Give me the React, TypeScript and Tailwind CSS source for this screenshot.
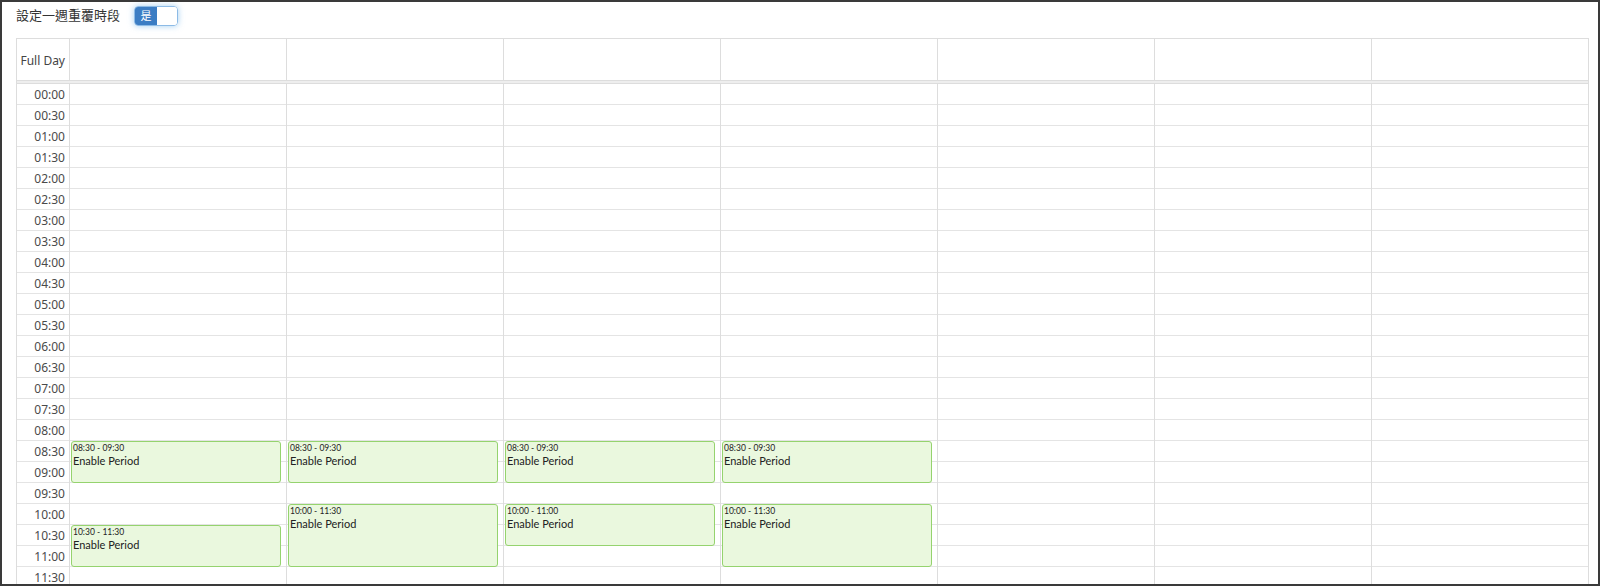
import React from 'react';

type Period = { day: number; start: string; end: string };

const ROW_H = 21;

// half-hour slots from 00:00 to 11:30; the rest is scrolled out of view
const slots = Array.from({ length: 24 }, (_, i) => {
  const h = String(Math.floor(i / 2)).padStart(2, '0');
  return `${h}:${i % 2 ? '30' : '00'}`;
});

const periods: Period[] = [
  { day: 0, start: '08:30', end: '09:30' },
  { day: 0, start: '10:30', end: '11:30' },
  { day: 1, start: '08:30', end: '09:30' },
  { day: 1, start: '10:00', end: '11:30' },
  { day: 2, start: '08:30', end: '09:30' },
  { day: 2, start: '10:00', end: '11:00' },
  { day: 3, start: '08:30', end: '09:30' },
  { day: 3, start: '10:00', end: '11:30' },
];

const slotIndex = (t: string) => slots.indexOf(t);

const Toggle: React.FC = () => (
  <div className="flex h-[20px] w-[44px] overflow-hidden rounded-[4px] border border-[#8dbbe6] shadow-[0_0_6px_rgba(102,175,233,0.6)]">
    <div className="flex w-[22px] items-center justify-center bg-[#3b7dc4] text-[11px] text-white">是</div>
    <div className="flex-1 bg-white" />
  </div>
);

const EventBlock: React.FC<{ p: Period }> = ({ p }) => {
  const s = slotIndex(p.start);
  const e = slotIndex(p.end);
  return (
    <div
      className="absolute left-[1px] right-[5px] rounded-[3px] border border-[#95d36e] bg-[#eaf8de] px-[1px] font-['Lato',sans-serif] text-[#222]"
      style={{ top: s * ROW_H, height: (e - s) * ROW_H }}
    >
      <div className="mt-[1px] text-[8.5px] leading-[11px]">
        {p.start} - {p.end}
      </div>
      <div className="text-[11px] leading-[14px]">Enable Period</div>
    </div>
  );
};

export default function App() {
  return (
    <div className="h-[588px] w-[1600px] bg-white font-['Noto_Sans','Noto_Sans_CJK_TC',sans-serif]">
      <div className="h-[586px] overflow-hidden border-2 border-[#3a3a3a] pl-[14px]">
        <div className="flex h-[28px] items-center gap-[14px]">
          <span className="text-[13px] text-[#333]">設定一週重覆時段</span>
          <Toggle />
        </div>

        <div className="mt-[8px] w-[1573px] border border-[#ddd]">
          {/* all-day row */}
          <div className="grid h-[41px] grid-cols-[52px_repeat(7,1fr)]">
            <div className="flex items-center justify-end pr-[4px] pt-[2px] text-[12px] text-[#444]">Full Day</div>
            {Array.from({ length: 7 }, (_, i) => (
              <div key={i} className="border-l border-[#ddd]" />
            ))}
          </div>
          <div className="h-[4px] border-y border-[#ddd] bg-[#eee]" />

          {/* time grid */}
          <div className="grid grid-cols-[52px_repeat(7,1fr)]">
            <div>
              {slots.map((t) => (
                <div
                  key={t}
                  className="flex h-[21px] items-center justify-end border-b border-[#e4e4e4] pr-[4px] pt-[1px] text-[12px] text-[#4a4a4a]"
                >
                  {t}
                </div>
              ))}
            </div>
            {Array.from({ length: 7 }, (_, d) => (
              <div key={d} className="relative border-l border-[#ddd]">
                {slots.map((t) => (
                  <div key={t} className="h-[21px] border-b border-[#e4e4e4]" />
                ))}
                {periods
                  .filter((p) => p.day === d)
                  .map((p) => (
                    <EventBlock key={p.start} p={p} />
                  ))}
              </div>
            ))}
          </div>
        </div>
      </div>
    </div>
  );
}
